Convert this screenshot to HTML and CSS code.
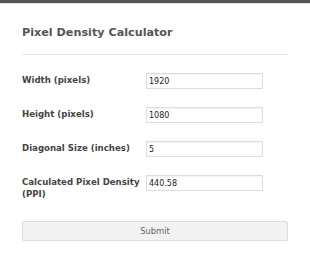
FILE: index.html
```html
<!DOCTYPE html>
<html lang="en">
<head>
    <meta charset="UTF-8">
    <title>Pixel Density Calculator</title>
    <link rel="stylesheet" href="styles.css">
</head>
<body>
    <div class="topbar"></div>
    <div class="card">
        <h2 class="title">Pixel Density Calculator</h2>
        <hr class="divider">
        <form class="calc-form" onsubmit="return false">
            <label class="field-label" for="width">Width (pixels)</label>
            <input class="field-input" type="text" id="width" value="1920">

            <label class="field-label" for="height">Height (pixels)</label>
            <input class="field-input" type="text" id="height" value="1080">

            <label class="field-label" for="diag">Diagonal Size (inches)</label>
            <input class="field-input" type="text" id="diag" value="5">

            <label class="field-label" for="ppi">Calculated Pixel Density (PPI)</label>
            <input class="field-input" type="text" id="ppi" value="440.58">
        </form>
        <button class="submit-btn" type="button">Submit</button>
    </div>
</body>
</html>
```

FILE: styles.css
```css
body {
    margin: 0;
    padding: 0;
    background-color: #fff;
    font-family: "DejaVu Sans", Verdana, sans-serif;
}

.topbar {
    height: 3px;
    background-color: #555;
    border-bottom: 1px solid #ddd;
}

.card {
    padding: 21px 22px 0 22px;
}

.title {
    margin: 0;
    font-size: 11.2px;
    line-height: 16px;
    font-weight: bold;
    color: #555;
}

.divider {
    border: none;
    border-top: 1px solid #e6e6e6;
    margin: 13px 0 18px 0;
}

.calc-form {
    display: grid;
    grid-template-columns: 124px 117px;
    row-gap: 18px;
    align-items: start;
}

.field-label {
    font-size: 8.6px;
    line-height: 12px;
    font-weight: bold;
    color: #444;
    padding-top: 1px;
}

.field-input {
    box-sizing: border-box;
    width: 117px;
    height: 16px;
    margin: 0;
    padding: 0 2px;
    border: 1px solid #ddd;
    box-shadow: inset 0 1px 1px rgba(0, 0, 0, 0.05);
    font-family: "DejaVu Sans", Verdana, sans-serif;
    font-size: 8px;
    color: #222;
    outline: none;
}

.submit-btn {
    display: block;
    box-sizing: border-box;
    width: 100%;
    height: 20px;
    margin-top: 21px;
    background-color: #f2f2f2;
    border: 1px solid #ddd;
    border-radius: 2px;
    box-shadow: 0 1px 1px rgba(0, 0, 0, 0.06);
    font-family: "DejaVu Sans", Verdana, sans-serif;
    font-size: 8.4px;
    color: #666;
    cursor: pointer;
}
```
